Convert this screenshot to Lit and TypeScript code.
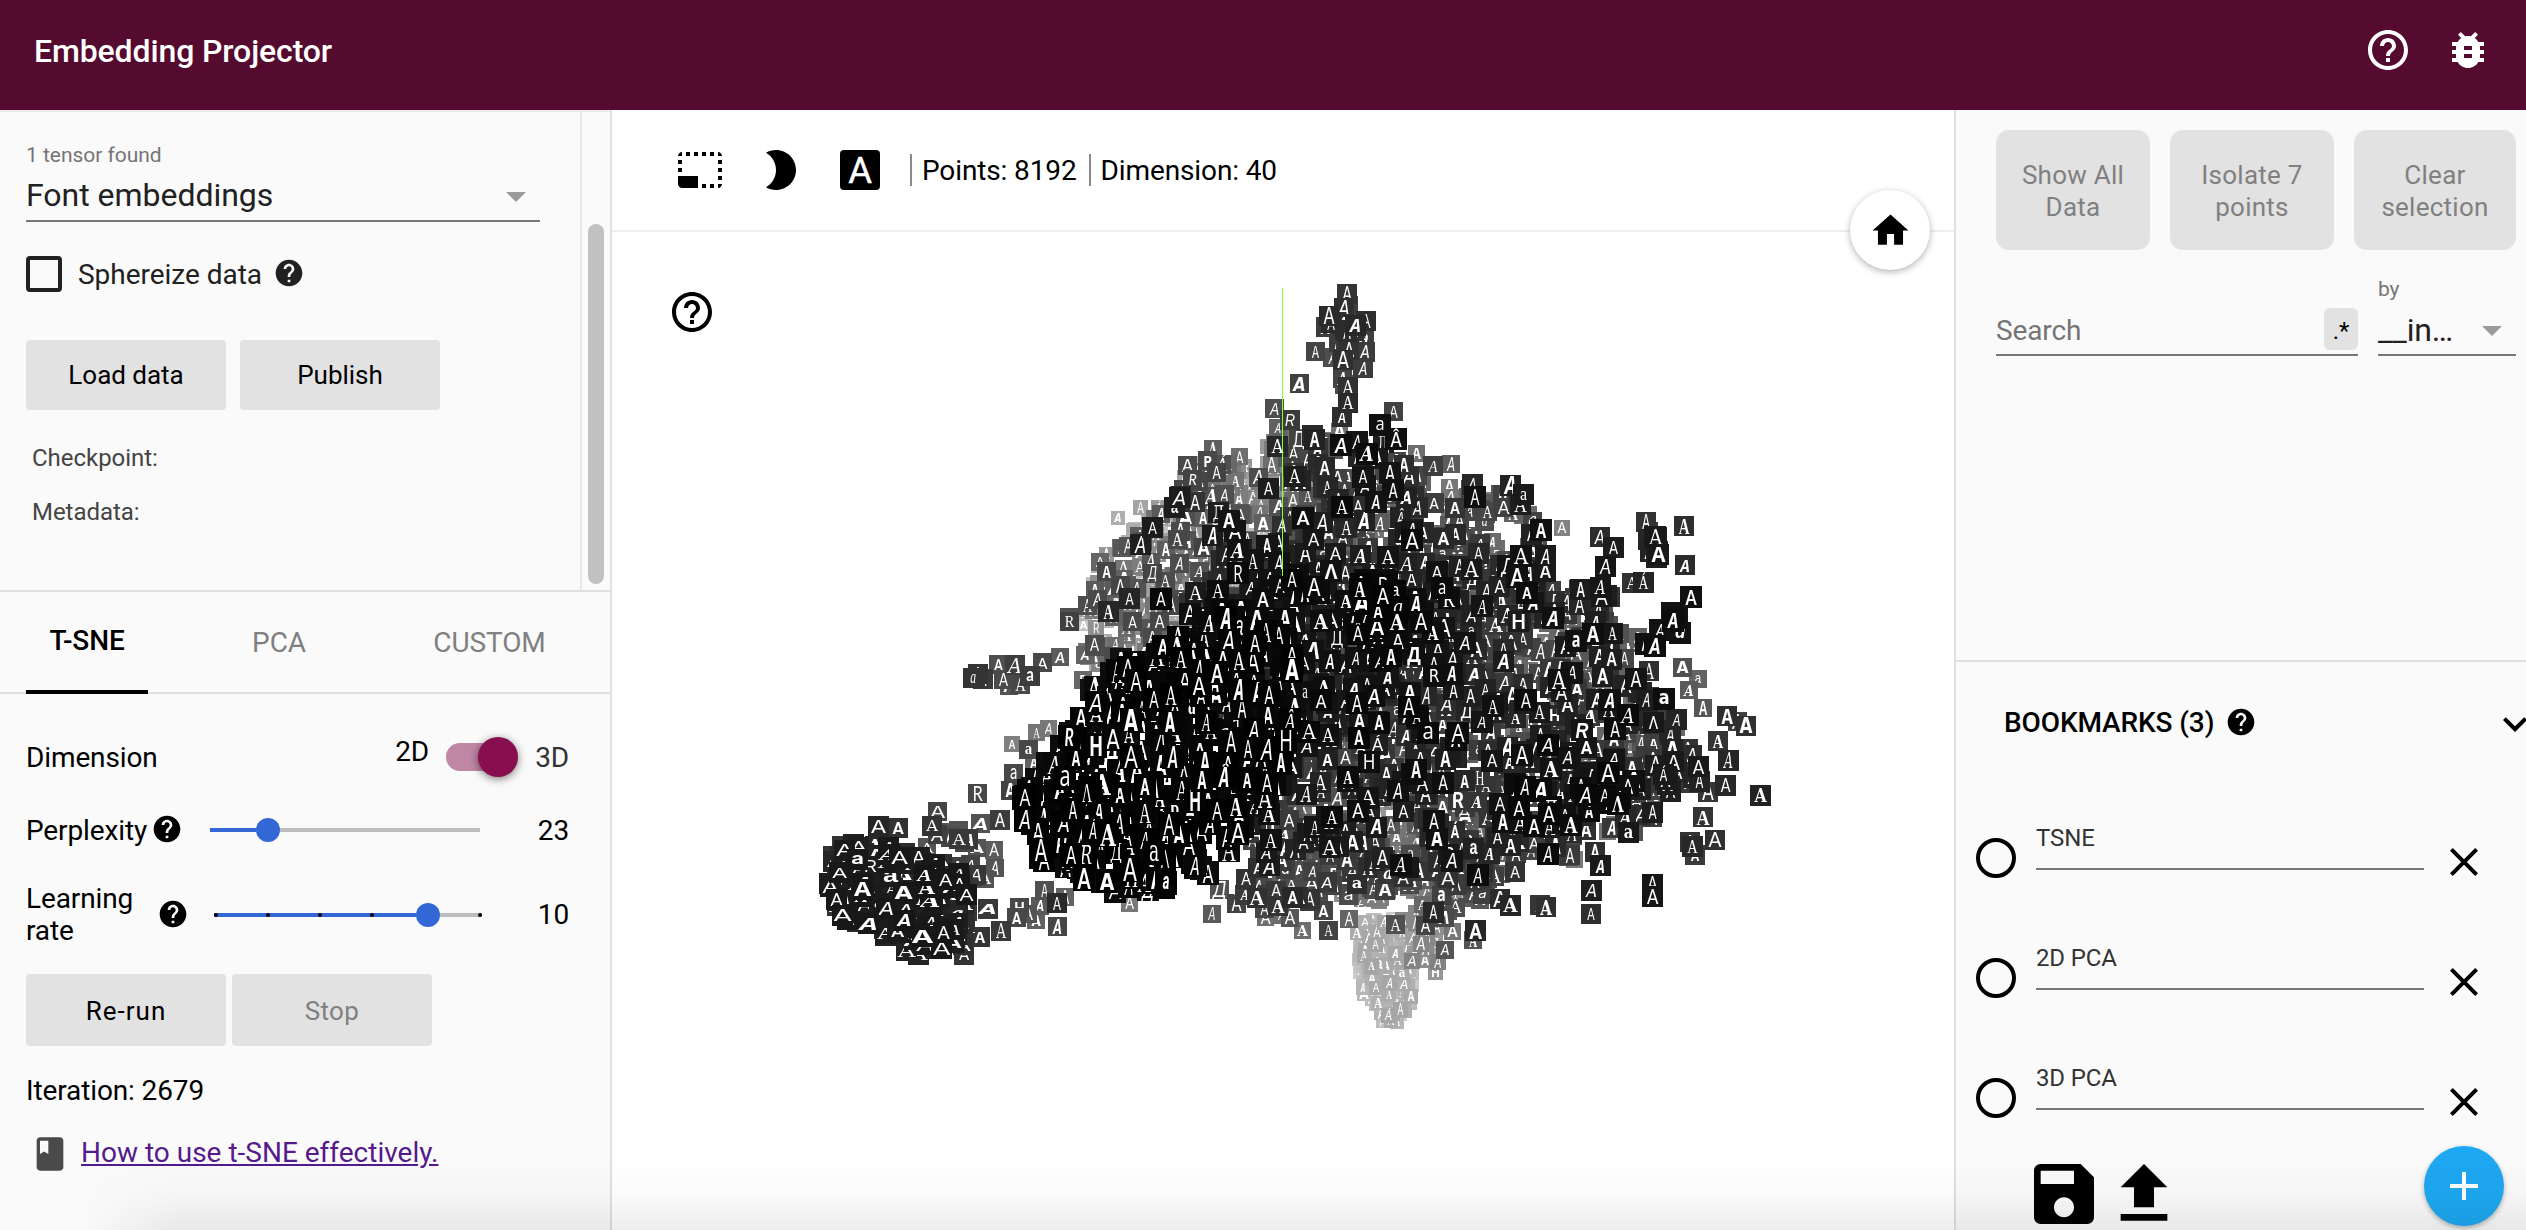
import { LitElement, html, css, svg } from "lit";
import { customElement, property } from "lit/decorators.js";

type Pt = [number, number];
interface Region { poly: Pt[]; n: number; lo: number; hi: number; wide?: number; tall?: number; }

const ORIGIN_X = 612;
const ORIGIN_Y = 232;

const UPPER_LEFT: Pt[] = [[1078,625],[1090,570],[1115,545],[1140,522],[1175,500],[1180,468],[1210,455],[1262,462],[1275,425],[1300,440],[1320,470],[1330,520],[1290,560],[1230,600],[1180,640],[1130,660],[1100,672],[1085,655]];
const UPPER_MID: Pt[] = [[1290,440],[1340,430],[1385,440],[1420,475],[1450,485],[1500,488],[1530,510],[1545,560],[1565,620],[1300,620],[1270,560],[1285,500]];
const MAIN: Pt[] = [[1200,620],[1290,560],[1530,560],[1565,600],[1620,630],[1630,680],[1680,720],[1685,790],[1640,830],[1580,865],[1480,880],[1400,870],[1250,870]];
const BLACK_LEFT: Pt[] = [[1095,680],[1130,660],[1200,625],[1250,605],[1290,640],[1300,700],[1280,780],[1230,850],[1205,878],[1150,890],[1105,888],[1062,874],[1027,848],[1020,792],[1048,750],[1080,712]];
const BLACK_MID: Pt[] = [[1360,580],[1400,575],[1412,620],[1390,660],[1350,650]];
const BLACK_RIGHT: Pt[] = [[1515,775],[1550,790],[1600,765],[1635,765],[1635,800],[1560,830],[1510,825]];
const BLOB: Pt[] = [[832,856],[848,842],[890,846],[930,860],[962,870],[968,900],[965,940],[942,950],[900,945],[868,930],[840,915],[829,890]];
const TAIL: Pt[] = [[1356,922],[1395,915],[1408,940],[1414,960],[1414,1000],[1398,1026],[1384,1026],[1364,1000],[1357,960]];

const REGIONS: Region[] = [
  { poly: UPPER_LEFT, n: 330, lo: 115, hi: 195 },
  { poly: UPPER_LEFT, n: 100, lo: 65, hi: 115 },
  { poly: UPPER_LEFT, n: 10, lo: 15, hi: 45 },
  { poly: [[1240,500],[1310,520],[1310,600],[1200,640],[1180,600]], n: 45, lo: 10, hi: 55 },
  { poly: UPPER_MID, n: 260, lo: 60, hi: 125 },
  { poly: UPPER_MID, n: 120, lo: 26, hi: 70 },
  { poly: UPPER_MID, n: 22, lo: 10, hi: 22 },
  { poly: MAIN, n: 600, lo: 55, hi: 125 },
  { poly: MAIN, n: 340, lo: 32, hi: 66 },
  { poly: MAIN, n: 190, lo: 10, hi: 32 },
  { poly: [[1200,620],[1290,570],[1400,580],[1480,640],[1420,720],[1300,760]], n: 85, lo: 6, hi: 24 },
  { poly: BLACK_LEFT, n: 440, lo: 0, hi: 14, tall: 1.25 },
  { poly: BLACK_MID, n: 24, lo: 3, hi: 12 },
  { poly: BLACK_RIGHT, n: 26, lo: 6, hi: 16 },
  { poly: [[1400,720],[1440,720],[1430,880],[1330,880],[1320,840],[1390,780]], n: 70, lo: 80, hi: 150 },
  { poly: [[1270,840],[1480,840],[1490,890],[1440,920],[1400,900],[1330,905],[1280,880]], n: 150, lo: 70, hi: 150, wide: 1.15 },
  { poly: [[1240,870],[1520,870],[1500,905],[1400,890],[1260,912]], n: 50, lo: 40, hi: 90, wide: 1.15 },
  { poly: TAIL, n: 190, lo: 165, hi: 205 },
  { poly: [[1400,905],[1440,900],[1435,950],[1415,985]], n: 22, lo: 130, hi: 170 },
  { poly: BLOB, n: 260, lo: 22, hi: 52, wide: 1.5 },
  { poly: [[920,820],[965,830],[980,870],[960,900],[925,870]], n: 18, lo: 55, hi: 85, wide: 1.3 },
  { poly: [[1340,305],[1350,300],[1355,330],[1352,420],[1340,420],[1338,340],[1324,328],[1324,316]], n: 26, lo: 42, hi: 78 },
  { poly: [[1640,532],[1688,537],[1686,558],[1660,562],[1635,548]], n: 9, lo: 22, hi: 45 },
  { poly: [[1572,585],[1612,578],[1610,620],[1580,640]], n: 16, lo: 22, hi: 80 },
  { poly: [[1672,600],[1684,600],[1684,620],[1666,624]], n: 6, lo: 12, hi: 28 },
  { poly: [[1660,745],[1705,745],[1700,785],[1660,795]], n: 12, lo: 25, hi: 60 },
];

const SINGLES: [number, number, number][] = [
  [1347,294,52],[1344,308,48],[1355,325,40],[1366,321,46],[1326,327,60],[1364,339,62],[1365,352,60],[1363,368,60],
  [1315,351,68],[1332,357,78],[1346,344,60],[1299,383,64],[1274,408,78],[1290,420,58],[1393,411,66],[1380,425,16],
  [1396,439,16],[1357,442,20],[1314,439,34],[1377,458,26],[1390,473,20],[1416,453,110],[1433,466,62],[1451,464,92],
  [1472,484,40],[1510,485,34],[1523,494,26],[1562,528,130],[1541,530,16],[1545,555,26],[1268,488,28],[1294,476,30],
  [1118,518,175],[1140,507,165],[1158,507,155],[1171,506,190],[1150,530,185],[1187,465,74],[1207,460,72],[1221,464,80],
  [1213,449,95],[1239,456,110],[1183,489,70],[1224,494,80],[1195,502,50],[1218,512,30],[1235,531,20],[1106,571,70],
  [1097,599,74],[1092,583,190],[1127,585,90],[1166,550,92],[1151,562,85],[1238,573,10],[1213,601,24],[1161,599,8],
  [1069,617,80],[1069,621,64],[1085,655,98],[1095,646,76],[1060,657,92],[1042,662,72],[1015,665,62],
  [998,664,78],[1003,679,74],[1030,676,60],[978,674,52],[973,678,52],[983,679,58],[1009,686,84],[1020,684,72],
  [1083,680,104],[1091,690,18],[1081,718,6],[1036,732,118],[1048,728,120],[1012,744,128],[1028,749,72],[1034,763,100],
  [1013,773,72],[1010,790,66],[977,793,72],[937,811,68],[980,823,82],[1000,820,60],[977,848,84],[994,850,92],
  [878,826,38],[898,828,50],[932,826,52],[948,832,86],[842,846,52],[840,856,40],[995,868,84],[985,879,84],
  [1019,907,72],[1028,914,84],[1040,906,90],[1044,890,80],[1057,903,42],[1065,897,98],[1036,920,96],[1057,926,70],
  [1016,917,72],[1001,931,58],[980,937,52],[988,909,56],[967,911,56],[963,945,48],[964,955,52],[918,954,36],
  [906,950,34],[940,946,36],[1129,903,120],[1115,892,12],[1164,888,4],[1212,914,90],[1219,889,82],[1236,903,66],[1245,895,58],
  [1265,917,110],[1281,915,108],[1290,918,86],[1302,930,110],[1328,930,66],[1349,919,100],[1323,910,68],[1395,924,80],
  [1425,925,70],[1433,912,40],[1452,931,118],[1475,930,38],[1473,940,84],[1445,950,84],[1438,962,130],[1435,972,150],
  [1540,905,54],[1546,907,48],[1510,905,38],[1591,914,46],[1591,890,30],[1600,865,26],[1652,884,22],[1652,896,22],[1695,855,58],
  [1692,846,40],[1703,817,52],[1715,840,48],[1690,842,50],[1760,795,34],[1728,760,38],[1725,785,40],[1708,792,54],
  [1718,741,52],[1692,755,44],[1693,777,38],[1746,726,48],[1737,721,64],[1727,716,46],[1703,708,86],[1689,690,90],
  [1698,679,100],[1682,667,80],[1664,699,14],[1676,719,36],[1649,671,46],[1636,679,20],[1639,643,100],[1646,644,18],
  [1612,633,22],[1576,641,16],[1600,537,44],[1613,547,28],[1646,522,50],[1648,532,60],[1685,565,44],[1690,597,26],
  [1691,597,16],[1684,526,46],[1660,630,18],[1680,633,18],[1655,646,14],[1638,637,98],[1632,583,50],[1643,582,36],[1605,566,22],
];

const FACES = ["Roboto", "Liberation Sans", "Liberation Serif", "DejaVu Serif", "Lato", "Inter", "Liberation Mono", "DejaVu Sans", "Open Sans"];
const RARE = ["a", "a", "a", "Λ", "Á", "Â", "R", "H", "Д"];

function seeded(seed: number) {
  return () => {
    seed = (seed + 0x6d2b79f5) | 0;
    let t = Math.imul(seed ^ (seed >>> 15), 1 | seed);
    t = (t + Math.imul(t ^ (t >>> 7), 61 | t)) ^ t;
    return ((t ^ (t >>> 14)) >>> 0) / 4294967296;
  };
}

function inside(x: number, y: number, poly: Pt[]) {
  let hit = false;
  for (let i = 0, j = poly.length - 1; i < poly.length; j = i++) {
    const [xi, yi] = poly[i];
    const [xj, yj] = poly[j];
    if (yi > y !== yj > y && x < ((xj - xi) * (y - yi)) / (yj - yi) + xi) hit = !hit;
  }
  return hit;
}

interface Sprite { x: number; y: number; shade: number; wide: number; tall: number; }

function buildSprites(rnd: () => number): Sprite[] {
  const out: Sprite[] = [];
  for (const r of REGIONS) {
    const xs = r.poly.map((p) => p[0]);
    const ys = r.poly.map((p) => p[1]);
    const x0 = Math.min(...xs), x1 = Math.max(...xs), y0 = Math.min(...ys), y1 = Math.max(...ys);
    let placed = 0;
    while (placed < r.n) {
      const x = x0 + rnd() * (x1 - x0);
      const y = y0 + rnd() * (y1 - y0);
      if (!inside(x, y, r.poly)) continue;
      out.push({ x, y, shade: r.lo + rnd() * (r.hi - r.lo), wide: r.wide ?? 1, tall: r.tall ?? 1 });
      placed++;
    }
  }
  for (const [x, y, shade] of SINGLES) {
    out.push({ x, y, shade, wide: x < 990 && y > 800 ? 1.4 : 1, tall: 1 });
  }
  return out.sort((a, b) => b.shade - a.shade);
}

@customElement("sprite-cloud")
export class SpriteCloud extends LitElement {
  static styles = css`
    :host { display: block; }
    canvas { display: block; }
  `;

  firstUpdated() {
    const ctx = this.renderRoot.querySelector("canvas")!.getContext("2d")!;
    ctx.translate(-ORIGIN_X, -ORIGIN_Y);
    ctx.textAlign = "center";
    const rnd = seeded(8192);

    ctx.strokeStyle = "#ffe6d2";
    ctx.lineWidth = 1;
    ctx.beginPath();
    ctx.moveTo(1069, 643);
    ctx.lineTo(1125, 668);
    ctx.stroke();

    for (const s of buildSprites(rnd)) {
      const size = 22.5 - s.shade * 0.048;
      const w = Math.round(size);
      const h = Math.round(size * (s.tall > 1 ? 1.08 : 1));
      const x = Math.round(s.x - w / 2);
      const y = Math.round(s.y - h / 2);
      const v = Math.round(s.shade);
      ctx.fillStyle = `rgb(${v},${v},${v})`;
      ctx.fillRect(x, y, w, h);
      const slant = rnd() < 0.3 ? "italic " : "";
      const weight = rnd() < 0.4 ? 700 : 400;
      const face = FACES[Math.floor(rnd() * FACES.length)];
      const glyph = rnd() < 0.14 ? RARE[Math.floor(rnd() * RARE.length)] : "A";
      const px = size * (0.84 + rnd() * 0.24);
      const sy = (s.tall * (0.9 + rnd() * 0.2)) / Math.sqrt(s.wide);
      const sx = (0.6 + rnd() * 0.32) * s.wide;
      ctx.save();
      ctx.beginPath();
      ctx.rect(x, y, w, h);
      ctx.clip();
      ctx.translate(x + w / 2, y + h / 2 + px * (glyph === "a" ? 0.27 : 0.36) * sy);
      ctx.scale(sx, sy);
      ctx.fillStyle = "#fff";
      ctx.font = `${slant}${weight} ${px.toFixed(1)}px "${face}", sans-serif`;
      ctx.fillText(glyph, 0, 0);
      ctx.restore();
    }

    ctx.fillStyle = "#86ff2e";
    ctx.fillRect(1282, 288, 1, 288);
  }

  render() {
    return html`<canvas width="1342" height="998"></canvas>`;
  }
}

const ICONS: Record<string, string> = {
  help: "M12 2C6.48 2 2 6.48 2 12s4.48 10 10 10 10-4.48 10-10S17.52 2 12 2zm1 17h-2v-2h2v2zm2.07-7.75l-.9.92C13.45 12.9 13 13.5 13 15h-2v-.5c0-1.1.45-2.1 1.17-2.83l1.24-1.26c.37-.36.59-.86.59-1.41 0-1.1-.9-2-2-2s-2 .9-2 2H8c0-2.21 1.79-4 4-4s4 1.79 4 4c0 .88-.36 1.68-.93 2.25z",
  helpOutline: "M11 18h2v-2h-2v2zm1-16C6.48 2 2 6.48 2 12s4.48 10 10 10 10-4.48 10-10S17.52 2 12 2zm0 18c-4.41 0-8-3.59-8-8s3.59-8 8-8 8 3.59 8 8-3.59 8-8 8zm0-14c-2.21 0-4 1.79-4 4h2c0-1.1.9-2 2-2s2 .9 2 2c0 2-3 1.75-3 5h2c0-2.25 3-2.5 3-5 0-2.21-1.79-4-4-4z",
  bug: "M20 8h-2.81c-.45-.78-1.07-1.45-1.82-1.96L17 4.41 15.59 3l-2.17 2.17C12.96 5.06 12.49 5 12 5c-.49 0-.96.06-1.41.17L8.41 3 7 4.41l1.62 1.63C7.88 6.55 7.26 7.22 6.81 8H4v2h2.09c-.05.33-.09.66-.09 1v1H4v2h2v1c0 .34.04.67.09 1H4v2h2.81c1.04 1.79 2.97 3 5.19 3s4.15-1.21 5.19-3H20v-2h-2.09c.05-.33.09-.66.09-1v-1h2v-2h-2v-1c0-.34-.04-.67-.09-1H20V8zm-6 8h-4v-2h4v2zm0-4h-4v-2h4v2z",
  select: "M23 15h-2v2h2v-2zm0-4h-2v2h2v-2zm0 8h-2v2c1 0 2-1 2-2zM15 3h-2v2h2V3zm8 4h-2v2h2V7zm-2-4v2h2c0-1-1-2-2-2zM3 21h8v-6H1v4c0 1.1.9 2 2 2zM3 7H1v2h2V7zm12 12h-2v2h2v-2zm4-16h-2v2h2V3zm0 16h-2v2h2v-2zM3 3C2 3 1 4 1 5h2V3zm0 8H1v2h2v-2zm8-8H9v2h2V3zM7 3H5v2h2V3z",
  moon: "M10 2c-1.82 0-3.53.5-5 1.35C7.99 5.08 10 8.3 10 12s-2.01 6.92-5 8.65C6.47 21.5 8.18 22 10 22c5.52 0 10-4.48 10-10S15.52 2 10 2z",
  home: "M10 20v-6h4v6h5v-8h3L12 3 2 12h3v8z",
  book: "M18 2H6c-1.1 0-2 .9-2 2v16c0 1.1.9 2 2 2h12c1.1 0 2-.9 2-2V4c0-1.1-.9-2-2-2zM6 4h5v8l-2.5-1.5L6 12V4z",
  chevron: "M16.59 8.59L12 13.17 7.41 8.59 6 10l6 6 6-6z",
  close: "M19 6.41L17.59 5 12 10.59 6.41 5 5 6.41 10.59 12 5 17.59 6.41 19 12 13.41 17.59 19 19 17.59 13.41 12z",
  save: "M17 3H5c-1.11 0-2 .9-2 2v14c0 1.1.89 2 2 2h14c1.1 0 2-.9 2-2V7l-4-4zm-5 16c-1.66 0-3-1.34-3-3s1.34-3 3-3 3 1.34 3 3-1.34 3-3 3zm3-10H5V5h10v4z",
  upload: "M9 16h6v-6h4l-7-7-7 7h4zm-4 2h14v2H5z",
  plus: "M19 13h-6v6h-2v-6H5v-2h6V5h2v6h6v2z",
};

@customElement("ui-icon")
export class UiIcon extends LitElement {
  @property() name = "help";
  static styles = css`
    :host { display: block; width: 48px; height: 48px; flex: none; }
    svg { display: block; width: 100%; height: 100%; fill: currentColor; }
  `;
  render() {
    return html`<svg viewBox="0 0 24 24">${svg`<path d=${ICONS[this.name]}></path>`}</svg>`;
  }
}

@customElement("app-root")
export class AppRoot extends LitElement {
  static styles = css`
    :host { display: block; font-family: Roboto, "Liberation Sans", sans-serif; font-size: 28px; letter-spacing: -0.12px; color: #000; }
    * { box-sizing: border-box; }
    .page { width: 2526px; height: 1230px; display: grid; grid-template: 110px 1120px / 612px 1342px 572px; overflow: hidden; position: relative; background: #fff; }
    .header { grid-column: 1 / 4; background: #550a2f; color: #fff; display: flex; align-items: flex-start; padding: 26px 34px 0; }
    .title { flex: 1; font-size: 32px; font-weight: 500; line-height: 50px; }
    .header ui-icon + ui-icon { margin-left: 32px; }

    .left { background: #fafafa; border-right: 2px solid #e0e0e0; display: flex; flex-direction: column; overflow: hidden; }
    .data { height: 480px; display: flex; border-top: 2px solid #ebebeb; flex: none; letter-spacing: -0.03px; }
    .data-body { width: 580px; padding: 30px 40px 0 26px; }
    .track { width: 30px; border-left: 2px solid #e8e8e8; padding: 112px 0 0 6px; }
    .thumb { width: 16px; height: 360px; border-radius: 8px; background: #c1c1c1; }
    .label { font-size: 21px; line-height: 26px; color: #757575; }
    .select { margin-top: 2px; height: 52px; border-bottom: 2px solid #757575; display: flex; align-items: center; justify-content: space-between; font-size: 32px; line-height: 50px; color: #212121; }
    .caret { width: 0; height: 0; border: 10px solid transparent; border-top-color: #9b9b9b; border-bottom: 0; }
    .caret.l { margin: 4px 14px 0 0; }
    .check { margin-top: 34px; height: 36px; display: flex; align-items: center; color: #212121; }
    .box { width: 36px; height: 36px; border: 4px solid #212121; border-radius: 4px; margin-right: 16px; }
    .small { width: 32px; height: 32px; }
    .check .small { margin: -2px 0 0 11px; }
    .buttons { display: flex; }
    .btn { width: 200px; height: 70px; border-radius: 4px; background: #e2e2e2; display: flex; align-items: center; justify-content: center; font-size: 26px; }
    .data .buttons { margin-top: 48px; gap: 14px; }
    .info { padding: 32px 6px 0; font-size: 24px; line-height: 32px; color: #444; }
    .info div + div { margin-top: 22px; }

    .tabs { height: 104px; border-top: 2px solid #e0e0e0; border-bottom: 2px solid #e0e0e0; display: flex; flex: none; padding-left: 26px; line-height: 100px; color: #808080; }
    .tab { text-align: center; }
    .tab.on { width: 122px; height: 102px; border-bottom: 4px solid #000; color: #000; font-weight: 500; line-height: 97px; }
    .tab.pca { width: 262px; line-height: 102px; }
    .tab.custom { width: 159px; line-height: 102px; }
    .controls { padding: 0 41px 0 26px; }
    .row { display: flex; align-items: center; }
    .dim { height: 44px; margin-top: 41px; }
    .dim .name { flex: 1; }
    .d2 { margin: -12px 17px 0 0; }
    .toggle { width: 72px; height: 40px; display: flex; align-items: center; }
    .bar { width: 60px; height: 28px; border-radius: 14px; background: #c086a5; }
    .knob { width: 40px; height: 40px; border-radius: 50%; background: #880e4f; margin-left: -28px; box-shadow: 0 2px 8px rgba(0,0,0,.5); }
    .d3 { margin-left: 17px; color: #333; }
    .perp { height: 40px; margin-top: 31px; }
    .perp .name { width: 123px; }
    .perp .small { margin: -2px 0 0 2px; }
    .value { flex: 1; text-align: right; }
    .slider { height: 24px; display: flex; align-items: center; flex: none; }
    .fill { height: 4px; background: #3367d6; display: flex; justify-content: space-between; }
    .rest { height: 4px; background: #bdbdbd; display: flex; justify-content: flex-end; }
    .dot { width: 24px; height: 24px; border-radius: 50%; background: #3367d6; flex: none; }
    .tick { width: 4px; height: 4px; border-radius: 50%; background: #000; }
    .perp .slider { width: 270px; margin-left: 27px; }
    .perp .fill { width: 46px; }
    .perp .rest { width: 200px; }
    .rate { height: 64px; margin-top: 33px; line-height: 32px; }
    .rate .name { width: 131px; }
    .rate .small { margin: -2px 0 0 0; }
    .rate .slider { width: 268px; margin-left: 25px; }
    .rate .fill { width: 202px; padding-right: 42px; }
    .rate .rest { width: 42px; }
    .controls .buttons { margin-top: 27px; gap: 6px; }
    .controls .btn { height: 72px; letter-spacing: 1px; padding-top: 1px; }
    .controls .off { color: #808080; letter-spacing: 0.3px; }
    .iter { margin-top: 29px; line-height: 32px; }
    .howto { margin-top: 26px; height: 40px; display: flex; align-items: center; letter-spacing: 0; }
    .howto ui-icon { width: 40px; height: 40px; color: #4a4a4a; margin: 1px 11px 0 4px; }
    .howto a { color: #551a8b; text-decoration: underline; line-height: 32px; }

    .center { background: #fff; position: relative; }
    .toolbar { height: 122px; border-bottom: 2px solid #eee; padding: 36px 0 0 64px; display: flex; }
    .toolbar ui-icon { margin-right: 32px; }
    .fontbox { width: 48px; height: 48px; margin-right: 26px; }
    .stat { height: 32px; margin-top: 8px; border-left: 2px solid #8a8a8a; padding: 0 12px 0 10px; line-height: 33px; }
    .corner { position: absolute; left: 56px; top: 178px; }
    .home { position: absolute; left: 1238px; top: 80px; width: 80px; height: 80px; border-radius: 50%; background: #fff; box-shadow: 0 2px 7px rgba(0,0,0,.3); display: flex; align-items: center; justify-content: center; }
    .home ui-icon { width: 43px; height: 43px; }

    .right { background: #fafafa; border-left: 2px solid #e0e0e0; display: flex; flex-direction: column; overflow: hidden; }
    .inspect { height: 550px; padding: 20px 10px 0 40px; flex: none; }
    .acts { display: grid; grid-template-columns: 154px 164px 162px; gap: 20px; }
    .act { height: 120px; border-radius: 13px; background: #e2e2e2; color: #808080; font-size: 26px; line-height: 32px; letter-spacing: 0.25px; display: flex; align-items: center; justify-content: center; text-align: center; padding-top: 2px; }
    .find { display: flex; justify-content: space-between; align-items: flex-end; height: 106px; }
    .search { width: 362px; height: 50px; border-bottom: 2px solid #757575; display: flex; justify-content: space-between; color: #757575; line-height: 50px; }
    .regex { width: 34px; height: 42px; margin-top: 2px; border-radius: 6px; background: #e2e2e2; color: #000; font-size: 24px; line-height: 47px; text-align: center; }
    .by { width: 138px; }
    .by .pick { height: 54px; padding-top: 3px; border-bottom: 2px solid #757575; display: flex; align-items: center; justify-content: space-between; font-size: 32px; color: #212121; }
    .by .caret { margin: 2px 14px 0 0; }
    .bm { border-top: 2px solid #e0e0e0; display: flex; flex-direction: column; }
    .bm-head { display: flex; height: 124px; align-items: center; padding-left: 48px; font-weight: 500; width: 640px; }
    .bm-head span { margin-top: -3px; }
    .bm-head .small { margin: -4px 0 0 11px; }
    .bm-head .chev { margin-left: 234px; }
    .item { height: 120px; padding: 52px 0 0 20px; display: flex; align-items: flex-start; }
    .radio { width: 40px; height: 40px; border: 4px solid #000; border-radius: 50%; margin-right: 20px; }
    .field { width: 388px; height: 50px; margin-top: -18px; border-bottom: 2px solid #757575; font-size: 24px; line-height: 36px; color: #333; margin-right: 16px; }
    .foot { display: flex; padding: 8px 0 0 68px; align-items: flex-start; }
    .foot .big { width: 80px; height: 80px; }
    .fab { width: 80px; height: 80px; border-radius: 50%; background: #1ea8f1; color: #fff; margin: -8px 0 0 240px; display: flex; align-items: center; justify-content: center; box-shadow: 0 2px 5px rgba(0,0,0,.3); }
    .shade { position: absolute; left: 0; right: 0; bottom: 0; height: 70px; pointer-events: none; background: linear-gradient(rgba(0,0,0,0), rgba(0,0,0,.02) 50%, rgba(0,0,0,.07)); -webkit-mask-image: linear-gradient(90deg, transparent 80px, #000 180px); mask-image: linear-gradient(90deg, transparent 80px, #000 180px); }
  `;

  private bookmarks = ["TSNE", "2D PCA", "3D PCA"];

  render() {
    return html`
      <div class="page">
        <div class="header">
          <div class="title">Embedding Projector</div>
          <ui-icon name="helpOutline"></ui-icon>
          <ui-icon name="bug"></ui-icon>
        </div>
        <div class="left">
          <div class="data">
            <div class="data-body">
              <div class="label">1 tensor found</div>
              <div class="select"><span>Font embeddings</span><span class="caret l"></span></div>
              <div class="check"><span class="box"></span><span>Sphereize data</span><ui-icon class="small"></ui-icon></div>
              <div class="buttons"><div class="btn">Load data</div><div class="btn">Publish</div></div>
              <div class="info"><div>Checkpoint:</div><div>Metadata:</div></div>
            </div>
            <div class="track"><div class="thumb"></div></div>
          </div>
          <div class="tabs">
            <div class="tab on">T-SNE</div><div class="tab pca">PCA</div><div class="tab custom">CUSTOM</div>
          </div>
          <div class="controls">
            <div class="row dim">
              <span class="name">Dimension</span><span class="d2">2D</span>
              <span class="toggle"><span class="bar"></span><span class="knob"></span></span>
              <span class="d3">3D</span>
            </div>
            <div class="row perp">
              <span class="name">Perplexity</span><ui-icon class="small"></ui-icon>
              <span class="slider"><span class="fill"></span><span class="dot"></span><span class="rest"></span></span>
              <span class="value">23</span>
            </div>
            <div class="row rate">
              <span class="name">Learning<br>rate</span><ui-icon class="small"></ui-icon>
              <span class="slider">
                <span class="fill">${[0, 1, 2, 3].map(() => html`<span class="tick"></span>`)}</span><span class="dot"></span><span class="rest"><span class="tick"></span></span>
              </span>
              <span class="value">10</span>
            </div>
            <div class="buttons"><div class="btn">Re-run</div><div class="btn off">Stop</div></div>
            <div class="iter">Iteration: 2679</div>
            <div class="howto"><ui-icon name="book"></ui-icon><a>How to use t-SNE effectively.</a></div>
          </div>
        </div>
        <div class="center">
          <div class="toolbar">
            <ui-icon name="select"></ui-icon>
            <ui-icon name="moon"></ui-icon>
            <svg class="fontbox" viewBox="0 0 48 48">
              <rect x="4" y="4" width="40" height="40" rx="4"></rect>
              <text x="24" y="37" text-anchor="middle" fill="#fff" stroke="#fff" stroke-width="0.4" font-size="36.5">A</text>
            </svg>
            <div class="stat">Points: 8192</div>
            <div class="stat">Dimension: 40</div>
          </div>
          <sprite-cloud></sprite-cloud>
          <ui-icon class="corner" name="helpOutline"></ui-icon>
          <div class="home"><ui-icon name="home"></ui-icon></div>
        </div>
        <div class="right">
          <div class="inspect">
            <div class="acts">
              <div class="act">Show All<br>Data</div>
              <div class="act">Isolate 7<br>points</div>
              <div class="act">Clear<br>selection</div>
            </div>
            <div class="find">
              <div class="search"><span>Search</span><span class="regex">.*</span></div>
              <div class="by"><div class="label">by</div><div class="pick"><span>__in…</span><span class="caret"></span></div></div>
            </div>
          </div>
          <div class="bm">
            <div class="bm-head"><span>BOOKMARKS (3)</span><ui-icon class="small"></ui-icon><ui-icon class="chev" name="chevron"></ui-icon></div>
            ${this.bookmarks.map((b) => html`
              <div class="item"><span class="radio"></span><div class="field">${b}</div><ui-icon name="close"></ui-icon></div>`)}
            <div class="foot"><ui-icon class="big" name="save"></ui-icon><ui-icon class="big" name="upload"></ui-icon><div class="fab"><ui-icon name="plus"></ui-icon></div></div>
          </div>
        </div>
        <div class="shade"></div>
      </div>
    `;
  }
}
